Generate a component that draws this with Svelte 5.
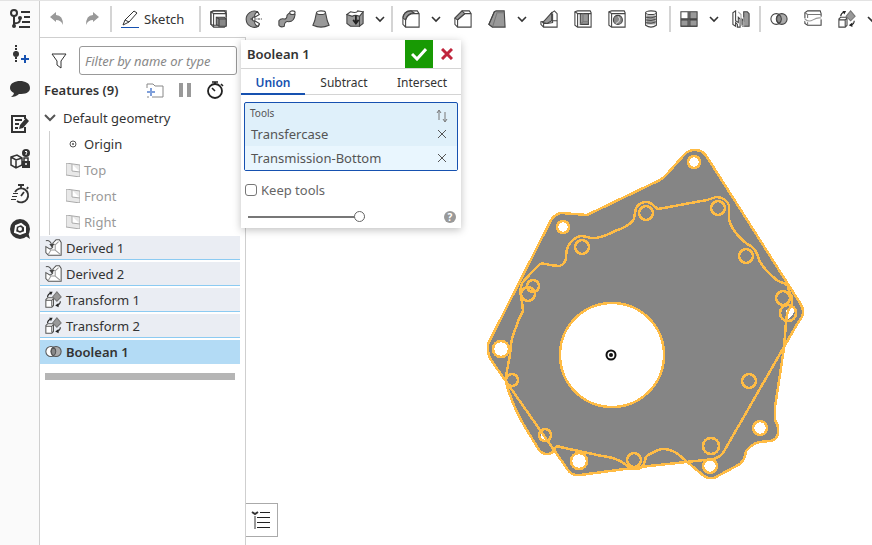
<script lang="ts">
	type Tool = { name: string; icon: string; menu?: boolean; divider?: boolean };

	const tools: Tool[] = [
		{ name: 'Extrude', icon: 'extrude' },
		{ name: 'Revolve', icon: 'revolve' },
		{ name: 'Sweep', icon: 'sweep' },
		{ name: 'Loft', icon: 'loft' },
		{ name: 'Thicken', icon: 'thicken', menu: true, divider: true },
		{ name: 'Fillet', icon: 'fillet', menu: true },
		{ name: 'Chamfer', icon: 'chamfer' },
		{ name: 'Draft', icon: 'draft', menu: true },
		{ name: 'Rib', icon: 'rib' },
		{ name: 'Shell', icon: 'shell' },
		{ name: 'Hole', icon: 'hole' },
		{ name: 'Thread', icon: 'thread', divider: true },
		{ name: 'Pattern', icon: 'pattern', menu: true },
		{ name: 'Mirror', icon: 'mirror', divider: true },
		{ name: 'Boolean', icon: 'boolean' },
		{ name: 'Split', icon: 'split' },
		{ name: 'Transform', icon: 'transform', menu: true }
	];

	const railItems = [
		{ name: 'Feature list', icon: 'tree' },
		{ name: 'Insert', icon: 'insert' },
		{ name: 'Comments', icon: 'comment' },
		{ name: 'Notes', icon: 'notes' },
		{ name: 'Permissions', icon: 'lock' },
		{ name: 'Performance', icon: 'speed' },
		{ name: 'Support', icon: 'support' }
	];

	const planes = ['Top', 'Front', 'Right'];

	const features = [
		{ name: 'Derived 1', icon: 'derived' },
		{ name: 'Derived 2', icon: 'derived' },
		{ name: 'Transform 1', icon: 'transform' },
		{ name: 'Transform 2', icon: 'transform' },
		{ name: 'Boolean 1', icon: 'boolean' }
	];

	const operations = ['Union', 'Subtract', 'Intersect'];

	// holes that go all the way through: x, y, radius
	const through = [
		[694, 162, 6], [563, 227, 6], [501, 349, 8], [579, 461, 8],
		[710, 466, 7], [760, 428, 7], [612, 355, 52]
	];
	const blind = [
		[646, 213, 7], [582, 247, 7], [533, 286, 6], [528, 294, 7], [718, 208, 7],
		[746, 256, 7], [783, 298, 7], [788, 313, 8], [749, 381, 7], [711, 446, 8],
		[634, 460, 7], [545, 435, 6], [512, 380, 6]
	];
	const upperBody =
		'M488 346Q488 343 490 340L551 220Q556 213 562 213L587 215L660 180Q664 178 667 174L684 155Q688 150 695 150Q703 150 707 157L800 303Q805 310 802 317L796 326L723 453Q720 457 714 459L640 467L580 475Q572 476 568 470L491 360Q488 355 488 350Z';
	const lowerBody =
		'M786 322L784 348L775 407L775 420Q779 426 778 433Q777 440 770 441L759 442Q752 444 746 451L745 456Q744 460 740 464L716 477Q710 480 704 476L679 455Q672 449 663 449Q660 449 656 451L648 455Q645 457 645 461Q643 468 638 469L631 469Q625 464 620 461Q612 457 602 456L560 447Q556 445 554 450Q552 454 547 454Q542 454 539 450L525 427Q515 410 510 395Q506 387 506 376L510 355Q511 338 515 330L519 319L523 311L522 302Q519 290 522 283L532 272L540 264Q544 263 550 265L559 266Q565 265 566 258Q566 248 570 243Q576 236 582 236Q588 237 591 238Q600 239 615 231Q630 226 634 219Q635 212 636 208Q640 202 646 202Q651 202 655 207L658 209L707 200L716 197Q725 197 729 205L729 220Q733 233 747 244Q756 247 759 260Q764 270 778 281Q785 283 788 286Q789 293 792 297Q793 305 789 309L787 314Z';

	let filter = $state('');
	let operation = $state('Union');
	let selected = $state('Boolean 1');
	let picks = $state(['Transfercase', 'Transmission-Bottom']);
	let keepTools = $state(false);
	let opacity = $state(100);
</script>

{#snippet icon(name: string)}
	<svg class="icon" viewBox="0 0 20 20" aria-hidden="true">
		{#if name === 'extrude'}
			<path d="M1 2L4 1H18V17L16 19H4L1 16Z" fill="#fff" />
			<path d="M1 2L4 4V19M4 4H18M8 17H4L1 16V2L4 1H16L18 4V8" />
			<path d="M7 8H16L18 10V18H10L7 16Z" fill="#888" /><path d="M7 8L10 10H18M10 10V18" />
		{:else if name === 'revolve'}
			<path d="M16 4L15 2A9 9 0 1 0 16 18L17 16L12 12Q10 13 9 10Q10 7 12 8Z" fill="#999" />
			<path d="M15 2Q11 4 12 8L17 5ZM16 18Q11 17 12 12L17 15Z" fill="#fff" />
			<path d="M7 10H20" stroke-dasharray="3 1" />
		{:else if name === 'sweep'}
			<path d="M1 12Q3 9 7 10Q10 10 10 6Q12 3 14 3L19 5Q18 13 12 13Q7 12 7 18Q3 20 1 17Z" fill="#999" />
			<ellipse cx="16" cy="3" rx="3" ry="2" fill="#fff" />
		{:else if name === 'loft'}
			<path d="M5 3L3 12L1 17Q10 21 19 17L17 12L15 3Z" fill="#999" />
			<ellipse cx="10" cy="3" rx="5" ry="2" fill="#fff" />
		{:else if name === 'thicken'}
			<path d="M1 5L15 5V18H5L1 15Z" fill="#999" /><path d="M15 5L19 2V15L15 18Z" fill="#999" />
			<path d="M1 5L5 2Q12 4 13 1L19 2L15 7Q10 5 7 7Z" fill="#fff" />
			<path d="M11 6V14M8 11L11 15L14 11" stroke="#222" stroke-width="2" />
		{:else if name === 'fillet'}
			<path d="M1 11Q1 1 10 1H17L19 4V19H4L1 16Z" fill="#fff" />
			<path d="M1 9Q2 1 10 1L13 3Q6 4 4 11Z" fill="#999" />
			<path d="M4 19V11Q6 4 13 4H19" />
		{:else if name === 'chamfer'}
			<path d="M1 9L9 1H17L19 4V19H4L1 16Z" fill="#fff" />
			<path d="M1 9L9 1L12 4L4 11Z" fill="#999" /><path d="M4 19V11L12 4H19" />
		{:else if name === 'draft'}
			<path d="M7 2L9 1H18L19 19H5L1 16Z" fill="#999" /><path d="M5 19L10 3H18" stroke="#777" />
			<path d="M7 2L1 16L5 19" />
		{:else if name === 'rib'}
			<path d="M12 4L16 1L19 4V19H4L1 16V13L12 12Z" fill="#fff" />
			<path d="M3 14L13 3V12L8 15Z" fill="#999" /><path d="M13 12H19M4 19V15H8L14 14V4" />
		{:else if name === 'shell'}
			<path d="M1 2L4 1H18L19 3V19H4L1 17Z" fill="#fff" />
			<path d="M1 2L4 4V19M4 4H19" /><path d="M7 4H16V16H7Z" fill="#999" />
			<path d="M7 16L10 13V4M10 13H16" stroke="#777" />
		{:else if name === 'hole'}
			<path d="M1 2L4 1H18L19 3V19H4L1 17Z" fill="#fff" /><path d="M1 2L4 4V19M4 4H19" />
			<circle cx="11" cy="11" r="5" fill="#888" /><path d="M11 7Q16 11 9 15" stroke="#ccc" />
		{:else if name === 'thread'}
			<path d="M4 3V17Q10 21 16 17V3Z" fill="#fff" /><path d="M5 6H15V16H5Z" fill="#999" stroke="none" />
			<ellipse cx="10" cy="3" rx="6" ry="2" fill="#fff" />
			<path d="M4 8Q10 10 16 7M4 11Q10 13 16 10M4 14Q10 16 16 13" stroke-width="1" />
		{:else if name === 'pattern'}
			<path d="M1 2H9V10H1Z" fill="#fff" /><path d="M11 2H19V10H11ZM1 11H9V18H1ZM11 11H19V18H11Z" fill="#999" />
			<path d="M1 10H19M10 1V19M1 18H19" />
		{:else if name === 'mirror'}
			<path d="M1 3L4 1V12L7 14V8L9 10V19H6V16L4 14V18L1 16Z" fill="#fff" />
			<path d="M11 10L13 12V2H17L19 4V18H12L11 16Z" fill="#999" />
			<path d="M7 2L10 5V16L13 18V8" stroke="#aaa" />
		{:else if name === 'boolean'}
			<circle cx="7" cy="10" r="6" fill="#fff" /><circle cx="13" cy="10" r="6" fill="#aaa" />
			<path d="M10 5A6 6 0 0 1 10 15A6 6 0 0 1 10 5" fill="#888" />
		{:else if name === 'split'}
			<path d="M1 3L4 1H18L19 4V17H4L1 15Z" fill="#fff" /><path d="M1 3L4 5H19M4 5V9M4 13V17" stroke="#777" />
			<path d="M0 10Q5 14 10 11Q15 8 20 9" stroke="#fff" stroke-width="3" />
			<path d="M1 10Q5 14 10 11Q15 8 19 9" stroke="#999" />
		{:else if name === 'transform'}
			<path d="M1 10L3 8H10V17L8 19H1ZM1 11H8V18M8 11L10 9" fill="#fff" />
			<path d="M14 1L19 7L14 12L9 7Z" fill="#999" stroke="#777" />
			<path d="M3 7Q3 4 7 2M18 12Q18 16 14 17" stroke="#222" />
			<path d="M5 1H9L7 5ZM12 17L16 14V19Z" fill="#222" stroke="none" />
		{:else if name === 'derived'}
			<path d="M9 5L13 1H17L19 4V19H4L1 16V9L6 12L9 10Z" fill="#fff" />
			<path d="M9 5L12 7V13H7L4 18M12 7L16 3M12 13L18 18" stroke="#999" />
			<path d="M1 2Q7 1 8 8" /><path d="M5 6L8 10L11 6Z" fill="#444" stroke="none" />
		{/if}
	</svg>
{/snippet}

{#snippet railIcon(name: string)}
	<svg class="rail-icon" viewBox="0 0 20 20" aria-hidden="true">
		{#if name === 'tree'}
			<g fill="none" stroke="#333" stroke-width="2"><circle cx="4" cy="4" r="3" /><path d="M4 7V16M4 14Q10 15 10 10M11 3H20M14 8H20M12 13H20M9 18H20" /></g>
			<circle cx="4" cy="17" r="2" fill="#333" /><circle cx="10" cy="9" r="2" fill="#333" />
		{:else if name === 'insert'}
			<path d="M6 1V19" stroke="#333" stroke-width="2" stroke-dasharray="2 1" /><circle cx="6" cy="10" r="3" fill="#333" />
			<path d="M11 15H19M15 11V19" stroke="#1651b0" stroke-width="2" />
		{:else if name === 'comment'}
			<path d="M10 2C15 2 20 4 20 9S15 15 9 15Q6 18 1 18Q4 16 4 14Q0 12 0 9C0 4 5 2 10 2Z" fill="#333" />
		{:else if name === 'notes'}
			<path d="M15 5V2H2V18H15V13" fill="none" stroke="#333" stroke-width="2" /><path d="M5 6H12M5 10H9M5 14H8" stroke="#333" stroke-width="2" />
			<path d="M9 15L10 11L16 4L19 7L13 14Z" fill="#333" />
		{:else if name === 'lock'}
			<path d="M1 8L7 6L12 9V16L6 19L1 16ZM1 8L6 11L12 9M6 11V19" fill="none" stroke="#333" stroke-width="1.5" />
			<circle cx="16" cy="4" r="4" fill="#333" /><path d="M15 3Q16 1 17 3L16 5V6" fill="none" stroke="#fff" />
			<path d="M12 12H20V19H12Z" fill="#333" /><path d="M14 12V9H18V12" fill="none" stroke="#333" stroke-width="1.5" /><circle cx="16" cy="15" r="1" fill="#fff" />
		{:else if name === 'speed'}
			<path d="M5 8A7 7 0 1 1 7 17M11 1V4M8 1H14M17 5L18 3M11 12L14 8" fill="none" stroke="#333" stroke-width="1.8" /><path d="M3 9.5H8M2 12.5H7M1 15.5H6" stroke="#333" />
		{:else}
			<circle cx="10" cy="10" r="10" fill="#333" /><path d="M14 16L20 20L18 13Z" fill="#333" />
			<path d="M6 7L11 5L15 8V13L10 15L5 13Z" fill="none" stroke="#fff" stroke-width="2" /><circle cx="10" cy="10" r="2" fill="#fff" />
		{/if}
	</svg>
{/snippet}

{#snippet chevron()}
	<svg class="chevron" viewBox="0 0 10 8" aria-hidden="true"><path d="M1 2L5 6L9 2" /></svg>
{/snippet}

<div class="app">
	<nav class="rail" aria-label="Panels">
		{#each railItems as item (item.name)}
			<button aria-label={item.name}>{@render railIcon(item.icon)}</button>
		{/each}
	</nav>

	<div class="main">
		<div class="toolbar" role="toolbar" aria-label="Features">
			<button class="tool" aria-label="Undo">
				<svg class="history" viewBox="0 0 14 14" aria-hidden="true"><path d="M0 5L6 0V3Q13 3 13 13Q11 8 6 8V10Z" /></svg>
			</button>
			<button class="tool redo" aria-label="Redo">
				<svg class="history" viewBox="0 0 14 14" aria-hidden="true"><path d="M14 5L8 0V3Q1 3 1 13Q3 8 8 8V10Z" /></svg>
			</button>
			<span class="divider"></span>
			<button class="sketch">
				<svg viewBox="0 0 18 18" aria-hidden="true">
					<path d="M2 15L4 10L13 1L16 3L8 12ZM4 10L8 12" fill="#fff" stroke="#333" />
					<path d="M0 17.5H18" stroke="#1651b0" />
				</svg>
				Sketch
			</button>
			<span class="divider"></span>
			{#each tools as tool (tool.name)}
				<button class="tool" aria-label={tool.name}>{@render icon(tool.icon)}</button>
				{#if tool.menu}
					<button class="more" aria-label="More like {tool.name}">{@render chevron()}</button>
				{/if}
				{#if tool.divider}<span class="divider"></span>{/if}
			{/each}
		</div>

		<div class="workspace">
			<aside class="features">
				<div class="filter">
					<svg viewBox="0 0 16 16" aria-hidden="true"><path d="M1 1H15L10 8V15L6 12V8Z" fill="none" stroke="#333" /></svg>
					<input type="text" placeholder="Filter by name or type" aria-label="Filter by name or type" bind:value={filter} />
				</div>
				<div class="heading">
					<h2>Features ({features.length + planes.length + 1})</h2>
					<button aria-label="Add folder">
						<svg viewBox="0 0 18 16" aria-hidden="true"><path d="M1 6V2H7L9 4H17V15H6M1 15H3" fill="none" stroke="#888" /><path d="M1 10H9M5 6V14" stroke="#7f9fda" stroke-width="2" /></svg>
					</button>
					<button aria-label="Suspend">
						<svg viewBox="0 0 18 16" aria-hidden="true"><path d="M3 1H7V15H3ZM11 1H15V15H11Z" fill="#999" /></svg>
					</button>
					<button aria-label="Regeneration times">
						<svg viewBox="0 0 18 18" aria-hidden="true"><path d="M6 1H12M9 1V4M15 3L17 5M9 10L6 7" stroke="#222" stroke-width="1.6" /><circle cx="9" cy="10" r="7" fill="none" stroke="#222" stroke-width="1.8" /></svg>
					</button>
				</div>
				<button class="group" aria-expanded="true">
					<svg viewBox="0 0 12 8" aria-hidden="true"><path d="M1 1L6 6L11 1" fill="none" stroke="#555" stroke-width="2" /></svg>
					Default geometry
				</button>
				<ul class="geometry">
					<li>
						<svg viewBox="0 0 14 14" aria-hidden="true"><circle cx="7" cy="7" r="3" fill="#fff" stroke="#555" /><circle cx="7" cy="7" r="1" fill="#555" /></svg>
						Origin
					</li>
					{#each planes as plane (plane)}
						<li class="plane">
							<svg viewBox="0 0 14 14" aria-hidden="true"><path d="M0 0L14 2V14L0 12ZM6 1V8L14 9" fill="#e8e8e8" stroke="#aaa" /></svg>
							{plane}
						</li>
					{/each}
				</ul>
				<ul class="list">
					{#each features as feature (feature.name)}
						<li>
							<button class:selected={selected === feature.name} onclick={() => (selected = feature.name)}>
								{@render icon(feature.icon)}{feature.name}
							</button>
						</li>
					{/each}
				</ul>
				<div class="rollback"></div>
			</aside>

			<main class="canvas">
				<svg class="part" viewBox="484 146 324 337" shape-rendering="crispEdges" aria-label="Part">
					<path class="body" d={upperBody} />
					<path class="body" d={lowerBody} />
					{#each through as [x, y, r]}<circle class="through" cx={x} cy={y} {r} />{/each}
					<path d="M786 317L786 311Q790 305 794 307Q796 313 789 319Z" fill="#fff" />
					<path d="M541 433L546 440L541 439ZM528 289L534 291L532 292Z" fill="#fff" />
					<path class="edge" d={upperBody} />
					<path class="edge" d={lowerBody} />
					{#each [...through, ...blind] as [x, y, r]}<circle class="edge" cx={x} cy={y} {r} />{/each}
					<g shape-rendering="auto"><circle cx="611" cy="355" r="4.5" fill="#fff" stroke="#111" stroke-width="2" /><circle cx="611" cy="355" r="2" fill="#111" /></g>
				</svg>
				<button class="flyout" aria-label="Show tables">
					<svg viewBox="0 0 20 20" aria-hidden="true"><path d="M1 2L4 4L7 2" fill="none" stroke="#333" stroke-width="2" /><path d="M4 6V19" stroke="#999" stroke-width="2" /><path d="M9 2.5H19M6 7.5H19M6 12.5H19M6 17.5H19" stroke="#222" /></svg>
				</button>
			</main>

			<section class="dialog" aria-label="Boolean 1">
				<header>
					<h3>Boolean 1</h3>
					<button class="accept" aria-label="Accept"><svg viewBox="0 0 16 14" aria-hidden="true"><path d="M1 7L6 12L15 2" fill="none" stroke="#fff" stroke-width="3" /></svg></button>
					<button class="cancel" aria-label="Cancel"><svg viewBox="0 0 12 12" aria-hidden="true"><path d="M1 1L11 11M11 1L1 11" stroke="#c0253c" stroke-width="3" /></svg></button>
				</header>
				<div class="tabs" role="tablist">
					{#each operations as name (name)}
						<button role="tab" aria-selected={operation === name} class:active={operation === name} onclick={() => (operation = name)}>{name}</button>
					{/each}
				</div>
				<div class="picks">
					<div class="picks-head">
						<span>Tools</span>
						<svg viewBox="0 0 12 14" aria-hidden="true"><path d="M3 11V2M1 4L3 1L5 4M9 3V12M7 10L9 13L11 10" fill="none" stroke="#777" /></svg>
					</div>
					{#each picks as pick (pick)}
						<div class="pick">
							<span>{pick}</span>
							<button aria-label="Remove {pick}" onclick={() => (picks = picks.filter((p) => p !== pick))}>
								<svg viewBox="0 0 8 8" aria-hidden="true"><path d="M0 0L8 8M8 0L0 8" stroke="#555" /></svg>
							</button>
						</div>
					{/each}
				</div>
				<label class="keep"><input type="checkbox" bind:checked={keepTools} />Keep tools</label>
				<footer>
					<input type="range" min="0" max="100" aria-label="Preview" bind:value={opacity} />
					<button class="help" aria-label="Help">?</button>
				</footer>
			</section>
		</div>
	</div>
</div>

<style>
	:global(body) { margin: 0; background: #fff; }
	.app {
		display: flex; height: 100vh; box-sizing: border-box; overflow: hidden;
		border-top: 1px solid #e3e3e3; background: #fff; color: #333;
		font: 13px/20px "Noto Sans", "Open Sans", sans-serif;
	}
	button { border: none; background: none; padding: 0; margin: 0; font: inherit; color: inherit; cursor: pointer; }
	svg { display: block; flex: none; }
	h2, h3 { margin: 0; font-size: 13px; line-height: 20px; font-weight: 600; }
	ul { list-style: none; margin: 0; padding: 0; }

	.rail {
		flex: none; width: 39px; display: flex; flex-direction: column;
		background: #fafafa; border-right: 1px solid #cfcfcf;
	}
	.rail button { height: 35px; display: grid; place-items: center; }
	.rail-icon { width: 20px; height: 20px; }

	.main { flex: 1; min-width: 0; display: flex; flex-direction: column; }
	.toolbar { display: flex; align-items: center; height: 36px; overflow: hidden; }
	.tool { flex: none; width: 34px; height: 34px; display: grid; place-items: center; }
	.more { flex: none; width: 18px; height: 34px; }
	.icon { width: 18px; height: 18px; fill: none; stroke: #444; stroke-width: 1.2; }
	.chevron { width: 10px; height: 8px; margin: 0 3px; fill: none; stroke: #333; stroke-width: 1.6; }
	.history { width: 14px; height: 14px; fill: #999; }
	.redo { width: 35px; }
	.divider { flex: none; width: 2px; height: 26px; margin: 0 1px; background: #d4d4d4; }
	.sketch { flex: none; display: flex; align-items: center; gap: 5px; width: 85px; padding-left: 8px; }
	.sketch svg { width: 18px; height: 18px; }

	.workspace { position: relative; flex: 1; min-height: 0; display: flex; }
	.features {
		flex: none; width: 205px; border-top: 1px solid #cfcfcf; border-right: 1px solid #cfcfcf;
	}
	.filter { display: flex; align-items: center; gap: 12px; padding: 8px 8px 0 11px; }
	.filter svg { width: 16px; height: 16px; }
	.filter input {
		flex: 1; min-width: 0; height: 29px; box-sizing: border-box; padding: 0 5px;
		border: 1px solid #999; border-radius: 3px; font: italic 13px/20px "Noto Sans", "Open Sans", sans-serif; color: #333;
	}
	.filter input::placeholder { color: #888; opacity: 1; }
	.heading { display: flex; align-items: center; gap: 12px; height: 30px; padding: 0 21px 0 4px; }
	.heading h2 { flex: 1; }
	.heading svg { width: 18px; height: 18px; fill: none; }
	.group { display: flex; align-items: center; gap: 7px; height: 26px; padding-left: 4px; }
	.group svg { width: 12px; height: 8px; }
	.geometry { margin-left: 9px; border-left: 1px solid #cfcfcf; }
	.geometry li { display: flex; align-items: center; gap: 4px; height: 26px; padding-left: 16px; }
	.geometry svg { width: 14px; height: 14px; }
	.geometry .plane { color: #999; }
	.list { padding: 1px 5px 0 0; }
	.list button {
		display: flex; align-items: center; gap: 4px; width: 100%; height: 24px; margin-bottom: 2px;
		padding-left: 5px; background: #eaedf3; border-bottom: 1px solid #8ccbf2;
	}
	.list .icon { width: 17px; height: 17px; stroke: #555; }
	.list .selected { background: #b3dbf5; border-bottom-color: #b3dbf5; font-weight: 600; }
	.rollback { height: 7px; margin: 9px 10px 0 5px; background: #b5b5b5; }

	.canvas { position: relative; flex: 1; min-width: 0; overflow: hidden; }
	.part { position: absolute; left: 238px; top: 109px; width: 324px; height: 337px; }
	.body { fill: #858585; }
	.through { fill: #fff; }
	.edge { fill: none; stroke: #ffbc45; stroke-width: 2.5; }
	.flyout {
		position: absolute; left: 0; bottom: 8px; width: 32px; height: 34px;
		border: 1px solid #aaa; border-left: none; background: #fff;
	}
	.flyout svg { width: 20px; height: 20px; margin: 0 5px; }

	.dialog {
		position: absolute; left: 201px; top: 3px; width: 220px;
		background: #fff; box-shadow: 0 2px 8px rgba(0, 0, 0, 0.25);
	}
	.dialog header { display: flex; align-items: center; height: 28px; border-bottom: 1px solid #d4d4d4; }
	.dialog h3 { flex: 1; padding-left: 6px; }
	.dialog header button { width: 28px; height: 28px; display: grid; place-items: center; }
	.accept { background: #189a04; }
	.accept svg { width: 16px; height: 14px; }
	.cancel svg { width: 12px; height: 12px; }
	.tabs { display: grid; grid-template-columns: 64fr 78fr 78fr; border-bottom: 1px solid #d4d4d4; font-size: 12px; }
	.tabs button { height: 26px; margin-bottom: -1px; padding-top: 3px; border-bottom: 2px solid transparent; }
	.tabs .active { border-bottom-color: #1651b0; color: #1651b0; font-weight: 600; }
	.picks {
		margin: 7px 3px 0; border: 1px solid #1651b0; border-radius: 2px;
		background: #dff0fa; color: #555;
	}
	.picks-head { display: flex; justify-content: space-between; height: 19px; padding: 0 9px 0 5px; font-size: 10px; }
	.picks-head svg { width: 12px; height: 14px; margin-top: 6px; }
	.pick { display: flex; align-items: center; justify-content: space-between; height: 24px; padding: 0 11px 0 6px; }
	.pick:last-child { background: #e9f6fe; }
	.pick svg { width: 8px; height: 8px; }
	.keep { display: flex; align-items: center; gap: 4px; padding: 9px 4px 0; color: #666; }
	.keep input {
		appearance: none; width: 12px; height: 12px; box-sizing: border-box; margin: 0;
		border: 1px solid #777; border-radius: 3px; background: #fff;
	}
	.keep input:checked { background: #1651b0; }
	.dialog footer { display: flex; align-items: center; justify-content: space-between; padding: 11px 5px 5px 7px; }
	.dialog input[type='range'] { appearance: none; display: block; width: 117px; height: 12px; margin: 0; background: none; }
	.dialog input[type='range']::-webkit-slider-runnable-track { height: 2px; background: #777; }
	.dialog input[type='range']::-webkit-slider-thumb {
		appearance: none; width: 11px; height: 11px; margin-top: -5px; box-sizing: border-box;
		border: 1px solid #666; border-radius: 50%; background: #fff;
	}
	.help { width: 12px; height: 12px; border-radius: 50%; background: #999; color: #fff; font-size: 10px; line-height: 12px; font-weight: 700; }
</style>
